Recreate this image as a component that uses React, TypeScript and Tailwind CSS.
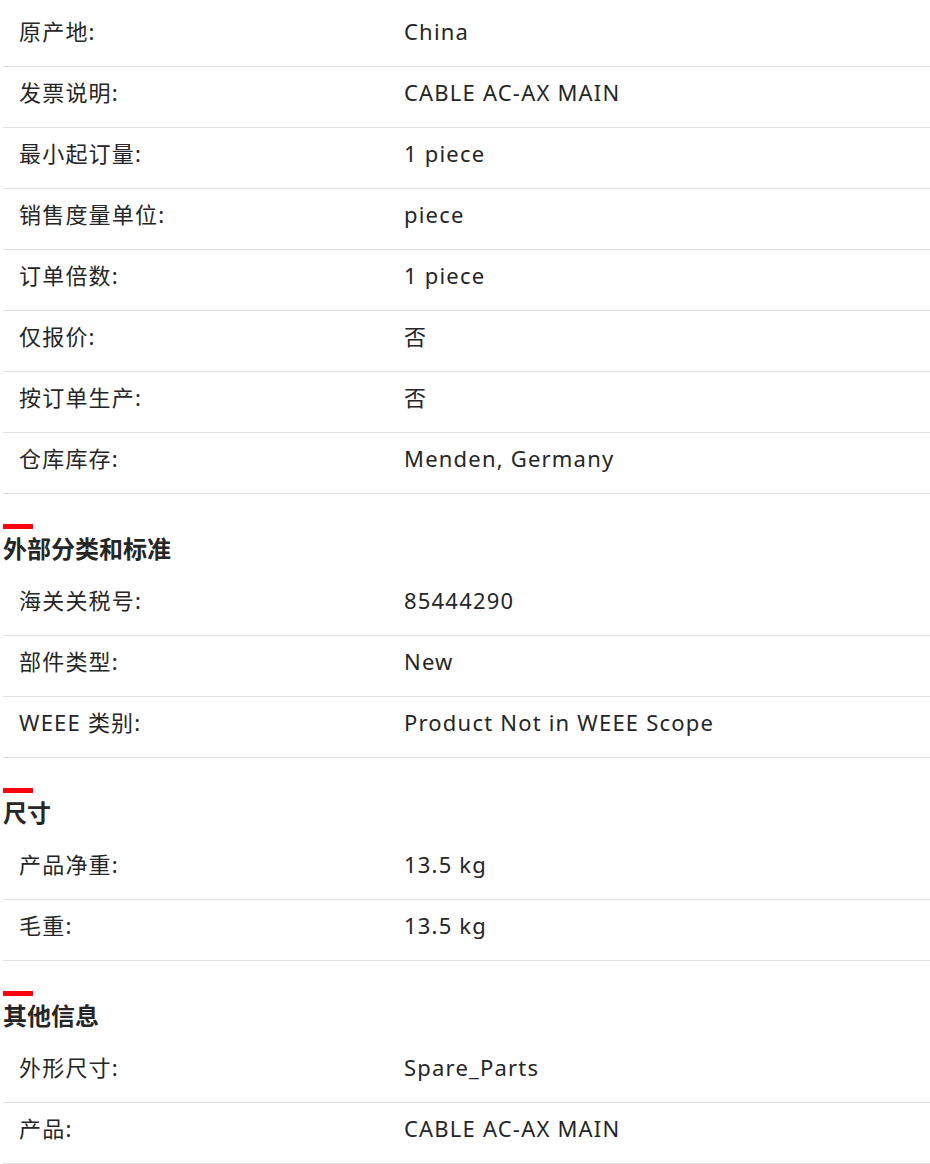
import React from "react";

type Row = [string, string];

const sec0: Row[] = [
  ["原产地:", "China"],
  ["发票说明:", "CABLE AC-AX MAIN"],
  ["最小起订量:", "1 piece"],
  ["销售度量单位:", "piece"],
  ["订单倍数:", "1 piece"],
  ["仅报价:", "否"],
  ["按订单生产:", "否"],
  ["仓库库存:", "Menden, Germany"],
];

const sections: { title: string; rows: Row[] }[] = [
  {
    title: "外部分类和标准",
    rows: [
      ["海关关税号:", "85444290"],
      ["部件类型:", "New"],
      ["WEEE 类别:", "Product Not in WEEE Scope"],
    ],
  },
  {
    title: "尺寸",
    rows: [
      ["产品净重:", "13.5 kg"],
      ["毛重:", "13.5 kg"],
    ],
  },
  {
    title: "其他信息",
    rows: [
      ["外形尺寸:", "Spare_Parts"],
      ["产品:", "CABLE AC-AX MAIN"],
    ],
  },
];

function Rows({ rows }: { rows: Row[] }) {
  return (
    <div>
      {rows.map(([k, v], i) => (
        <div
          key={i}
          className="flex h-[61px] items-start border-b border-[#e0e0e0] pt-[9px] text-[22px] leading-[32px] tracking-[1.2px] text-[#262626]"
        >
          <div className="w-[401px] shrink-0 pl-[16px]">{k}</div>
          <div>{v}</div>
        </div>
      ))}
    </div>
  );
}

export default function App() {
  return (
    <div
      className="min-h-[1164px] bg-white pl-[3px] pt-[6px]"
      style={{ fontFamily: '"Noto Sans", "Noto Sans CJK SC", sans-serif' }}
    >
      <div className="w-[927px]">
        <Rows rows={sec0} />
        {sections.map((s, i) => (
          <div key={i}>
            <div className="mt-[30px] h-[5px] w-[30px] bg-[#ff000f]" />
            <div className="mt-[2px] mb-[8px] text-[24px] font-bold leading-[36px] text-[#262626]">
              {s.title}
            </div>
            <Rows rows={s.rows} />
          </div>
        ))}
      </div>
    </div>
  );
}
